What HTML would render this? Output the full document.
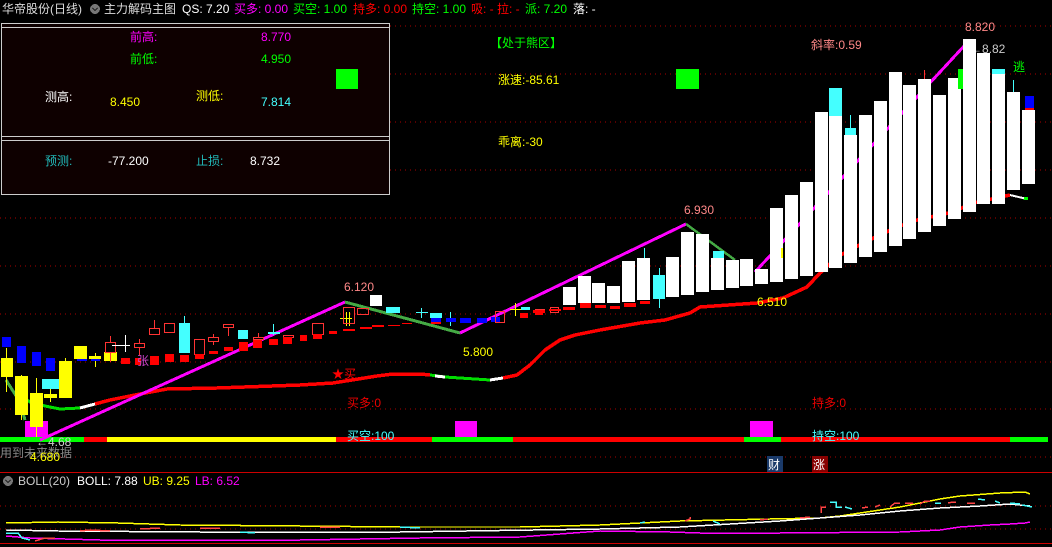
<!DOCTYPE html>
<html><head><meta charset="utf-8"><style>
html,body{margin:0;padding:0;background:#000;width:1052px;height:547px;overflow:hidden}
svg{display:block}
text{font-family:"Liberation Sans","Noto Sans CJK SC",sans-serif;font-size:12px}
</style></head><body>
<svg width="1052" height="547" viewBox="0 0 1052 547" xmlns="http://www.w3.org/2000/svg" shape-rendering="crispEdges">
<rect width="1052" height="547" fill="#000"/>
<g stroke="#a00" stroke-width="1" stroke-dasharray="1,4">
<line x1="390" y1="26" x2="1052" y2="26"/><line x1="390" y1="74" x2="1052" y2="74"/><line x1="390" y1="122" x2="1052" y2="122"/><line x1="390" y1="170" x2="1052" y2="170"/>
<line x1="0" y1="218" x2="1052" y2="218"/><line x1="0" y1="266" x2="1052" y2="266"/><line x1="0" y1="314" x2="1052" y2="314"/><line x1="0" y1="362" x2="1052" y2="362"/><line x1="0" y1="409" x2="1052" y2="409"/><line x1="0" y1="457" x2="1052" y2="457"/>
<line x1="0" y1="506" x2="1052" y2="506"/><line x1="0" y1="529" x2="1052" y2="529"/>
</g>
<line x1="0" y1="472.5" x2="1052" y2="472.5" stroke="#c00"/>
<line x1="0" y1="543.5" x2="1052" y2="543.5" stroke="#c00"/>

<text x="2" y="13" fill="#ddd">华帝股份(日线)</text>
<circle cx="95" cy="9" r="5" fill="#777"/><path d="M92.5 8 L95 10.5 L97.5 8" stroke="#222" fill="none" stroke-width="1.3"/>
<text x="104" y="13" fill="#ddd">主力解码主图</text>
<text x="182" y="13" fill="#fff">QS: 7.20</text>
<text x="234" y="13" fill="#f0f">买多: 0.00</text>
<text x="293" y="13" fill="#0f0">买空: 1.00</text>
<text x="353" y="13" fill="#f00">持多: 0.00</text>
<text x="412" y="13" fill="#0f0">持空: 1.00</text>
<text x="471" y="13" fill="#f00">吸: -</text>
<text x="497" y="13" fill="#f00">拉: -</text>
<text x="525" y="13" fill="#0f0">派: 7.20</text>
<text x="573" y="13" fill="#fff">落: -</text>

<rect x="1.5" y="23.5" width="388" height="171" fill="#0e0000" stroke="#ccc"/>
<line x1="2" y1="27.5" x2="389" y2="27.5" stroke="#ccc"/>
<line x1="2" y1="136.5" x2="389" y2="136.5" stroke="#ccc"/>
<line x1="2" y1="140.5" x2="389" y2="140.5" stroke="#ccc"/>
<text x="130" y="41" fill="#f0f">前高:</text><text x="261" y="41" fill="#f0f">8.770</text>
<text x="130" y="63" fill="#0f0">前低:</text><text x="261" y="63" fill="#0f0">4.950</text>
<text x="45" y="101" fill="#fff">测高:</text><text x="110" y="106" fill="#ff0">8.450</text>
<text x="196" y="100" fill="#ff0">测低:</text><text x="261" y="106" fill="#4ff">7.814</text>
<text x="45" y="165" fill="#2bb">预测:</text><text x="108" y="165" fill="#fff">-77.200</text>
<text x="196" y="165" fill="#2bb">止损:</text><text x="250" y="165" fill="#fff">8.732</text>
<rect x="336" y="69" width="22" height="20" fill="#0f0"/>
<rect x="676" y="69" width="23" height="20" fill="#0f0"/>
<text x="490" y="47" fill="#0f0">【处于熊区】</text>
<text x="498" y="84" fill="#ff0">涨速:-85.61</text>
<text x="498" y="146" fill="#ff0">乖离:-30</text>
<text x="811" y="49" fill="#f88">斜率:0.59</text>
<text x="965" y="31" fill="#f88">8.820</text>
<text x="970" y="53" fill="#ccc">←8.82</text>
<text x="1013" y="71" fill="#0f0">逃</text>

<rect x="0" y="437" width="84" height="5" fill="#0f0"/><rect x="84" y="437" width="23" height="5" fill="#f00"/><rect x="107" y="437" width="229" height="5" fill="#ff0"/><rect x="336" y="437" width="96" height="5" fill="#f00"/><rect x="432" y="437" width="81" height="5" fill="#0f0"/><rect x="513" y="437" width="231" height="5" fill="#f00"/><rect x="744" y="437" width="37" height="5" fill="#0f0"/><rect x="781" y="437" width="229" height="5" fill="#f00"/><rect x="1010" y="437" width="38" height="5" fill="#0f0"/>
<rect x="455" y="421" width="22" height="16" fill="#f0f"/><rect x="750" y="421" width="23" height="16" fill="#f0f"/>
<rect x="25" y="421" width="23" height="16" fill="#f0f"/>
<text x="347" y="407" fill="#e00">买多:0</text><text x="812" y="407" fill="#e00">持多:0</text>
<text x="347" y="440" fill="#4ff">买空:100</text><text x="812" y="440" fill="#4ff">持空:100</text>
<text x="0" y="457" fill="#888">用到未来数据</text>
<text x="36" y="446" fill="#ccc">←4.68</text>
<rect x="767" y="456" width="16" height="16" fill="#1a3a6a"/><text x="768" y="469" fill="#fff">财</text>
<rect x="812" y="456" width="16" height="16" fill="#800"/><text x="813" y="469" fill="#fff">涨</text>

<polyline fill="none" stroke="#0d0" stroke-width="3" points="15,392 30,402 45,406 60,409 80,408"/>
<polyline fill="none" stroke="#fff" stroke-width="3" points="80,408 95,404"/>
<polyline fill="none" stroke="#f00" stroke-width="3.5" points="95,404 110,400 140,394 167,389 217,388 300,385 333,383 377,376 393,374 420,374 430,375"/>
<polyline fill="none" stroke="#0d0" stroke-width="3" points="430,375 445,377 475,379 490,380"/>
<polyline fill="none" stroke="#fff" stroke-width="3" points="435,376 445,377"/>
<polyline fill="none" stroke="#fff" stroke-width="3" points="490,380 503,378"/>
<polyline fill="none" stroke="#f00" stroke-width="3.5" points="503,378 517,375 530,365 545,350 560,340 575,335 600,330 640,323 665,320 690,313 700,307 757,303 783,298 807,287 820,273 837,257 863,243 897,227 917,220 953,212 973,203 1010,195"/>
<polyline fill="none" stroke="#fff" stroke-width="2" points="1010,195 1027,199"/>
<rect x="1024" y="197" width="4" height="3" fill="#0f0"/>

<polyline fill="none" stroke="#4a4" stroke-width="3" points="6,380 20,402 25,420"/>
<polyline fill="none" stroke="#f0f" stroke-width="3" points="40,440 345,302"/>
<polyline fill="none" stroke="#4a4" stroke-width="3" points="345,302 460,333"/>
<polyline fill="none" stroke="#f0f" stroke-width="3" points="460,333 686,224"/>
<polyline fill="none" stroke="#4a4" stroke-width="2.5" points="686,224 735,260"/>
<polyline fill="none" stroke="#f0f" stroke-width="3" points="755,272 965,45"/>

<g>
<line x1="6.5" y1="348" x2="6.5" y2="392" stroke="#ff0"/><line x1="21.5" y1="375" x2="21.5" y2="420" stroke="#ff0"/><line x1="36.5" y1="378" x2="36.5" y2="437" stroke="#ff0"/><line x1="50.5" y1="382" x2="50.5" y2="402" stroke="#ff0"/><line x1="65.5" y1="358" x2="65.5" y2="398" stroke="#ff0"/><line x1="95.5" y1="353" x2="95.5" y2="367" stroke="#ff0"/>
<rect x="2" y="337" width="9" height="10" fill="#00f"/>
<rect x="1" y="358" width="12" height="19" fill="#ff0"/>
<rect x="17" y="346" width="9" height="17" fill="#00f"/>
<rect x="15" y="376" width="13" height="39" fill="#ff0"/>
<rect x="32" y="352" width="9" height="14" fill="#00f"/>
<rect x="30" y="393" width="13" height="34" fill="#ff0"/>
<rect x="46" y="358" width="9" height="13" fill="#00f"/>
<rect x="42" y="379" width="17" height="10" fill="#4ff"/>
<rect x="44" y="394" width="13" height="4" fill="#ff0"/>
<rect x="59" y="361" width="13" height="37" fill="#ff0"/>
<rect x="77" y="359" width="10" height="2" fill="#00f"/><rect x="74" y="346" width="13" height="13" fill="#ff0"/>
<rect x="91" y="359" width="9" height="2" fill="#00f"/><rect x="89" y="356" width="12" height="3" fill="#ff0"/>
<rect x="104" y="352" width="13" height="9" fill="#ff0"/>
<line x1="110.5" y1="336" x2="110.5" y2="362" stroke="#f33"/><rect x="105.5" y="342.5" width="10" height="10" fill="#000" stroke="#f33"/>
<line x1="112" y1="345.5" x2="130" y2="345.5" stroke="#fff"/><line x1="125.5" y1="335" x2="125.5" y2="352" stroke="#fff"/>
<rect x="121" y="358" width="9" height="6" fill="#f00"/>
<line x1="139.5" y1="339" x2="139.5" y2="355" stroke="#f33"/><rect x="134.5" y="343.5" width="10" height="4" fill="#000" stroke="#f33"/>
<rect x="135" y="358" width="6" height="7" fill="#f00"/>
<text x="137" y="365" fill="#c4c">张</text>
<rect x="150" y="356" width="9" height="9" fill="#f00"/>
<line x1="154.5" y1="320" x2="154.5" y2="335" stroke="#f33"/><rect x="149.5" y="328.5" width="10" height="6" fill="#000" stroke="#f33"/>
<rect x="164.5" y="323.5" width="10" height="9" fill="#000" stroke="#f33"/>
<rect x="165" y="354" width="9" height="8" fill="#f00"/>
<line x1="184.5" y1="316" x2="184.5" y2="323" stroke="#4ff"/><rect x="179" y="323" width="11" height="30" fill="#4ff"/>
<rect x="180" y="355" width="9" height="7" fill="#f00"/>
<rect x="194.5" y="339.5" width="10" height="15" fill="#000" stroke="#f33"/><rect x="195" y="354" width="9" height="5" fill="#f00"/>
<line x1="213.5" y1="334" x2="213.5" y2="345" stroke="#f33"/><rect x="208.5" y="337.5" width="10" height="4" fill="#000" stroke="#f33"/><rect x="209" y="351" width="9" height="3" fill="#f00"/>
<line x1="228.5" y1="324" x2="228.5" y2="336" stroke="#f33"/><rect x="223.5" y="324.5" width="10" height="3" fill="#000" stroke="#f33"/><rect x="224" y="347" width="9" height="4" fill="#f00"/>
<rect x="238" y="330" width="10" height="9" fill="#4ff"/><rect x="239" y="342" width="9" height="9" fill="#f00"/>
<line x1="258.5" y1="333" x2="258.5" y2="342" stroke="#f33"/><rect x="253.5" y="337.5" width="10" height="2" fill="#000" stroke="#f33"/><rect x="253" y="340" width="9" height="8" fill="#f00"/>
<line x1="273.5" y1="324" x2="273.5" y2="335" stroke="#4ff"/><rect x="268" y="332" width="12" height="2" fill="#4ff"/><rect x="269" y="339" width="9" height="6" fill="#f00"/>
<rect x="283.5" y="335.5" width="10" height="2" fill="#000" stroke="#f33"/><rect x="283" y="337" width="9" height="7" fill="#f00"/>
<rect x="300" y="335" width="7" height="6" fill="#f00"/>
<rect x="312.5" y="323.5" width="11" height="11" fill="#000" stroke="#f33"/><rect x="313" y="334" width="9" height="5" fill="#f00"/>
<rect x="329" y="331" width="8" height="3" fill="#f00"/>
<line x1="340" y1="318.5" x2="352" y2="318.5" stroke="#ff0"/><line x1="346.5" y1="312" x2="346.5" y2="326" stroke="#ff0"/><line x1="349.5" y1="312" x2="349.5" y2="326" stroke="#ff0"/>
<rect x="343.5" y="307.5" width="11" height="16" fill="none" stroke="#f33"/>
<rect x="357.5" y="308.5" width="11" height="6" fill="none" stroke="#f33"/>
<rect x="343" y="329" width="12" height="2" fill="#f00"/><rect x="360" y="327" width="12" height="2" fill="#f00"/><rect x="372" y="325" width="12" height="2" fill="#f00"/><rect x="388" y="325" width="12" height="1" fill="#f00"/><rect x="402" y="323" width="10" height="1" fill="#f00"/>
<rect x="370" y="295" width="12" height="11" fill="#fff"/>
<rect x="386" y="307" width="14" height="6" fill="#4ff"/>
<line x1="416" y1="312.5" x2="428" y2="312.5" stroke="#4ff"/><line x1="421.5" y1="308" x2="421.5" y2="318" stroke="#4ff"/>
<rect x="430" y="313" width="12" height="5" fill="#4ff"/><rect x="431" y="318" width="10" height="4" fill="#00f"/><rect x="431" y="322" width="10" height="2" fill="#f00"/>
<line x1="450.5" y1="312" x2="450.5" y2="326" stroke="#4ff"/><rect x="446" y="318" width="10" height="4" fill="#00f"/>
<rect x="460" y="318" width="11" height="5" fill="#00f"/><rect x="477" y="318" width="10" height="5" fill="#00f"/><rect x="491" y="317" width="9" height="5" fill="#00f"/>
<rect x="495.5" y="311.5" width="9" height="11" fill="none" stroke="#f33"/>
<line x1="510" y1="309.5" x2="522" y2="309.5" stroke="#ff0"/><line x1="515.5" y1="303" x2="515.5" y2="316" stroke="#ff0"/>
<rect x="521" y="307" width="9" height="3" fill="#4ff"/><rect x="520" y="313" width="8" height="5" fill="#f00"/>
<rect x="535.5" y="309.5" width="9" height="2" fill="none" stroke="#f33"/><rect x="535" y="313" width="8" height="2" fill="#f00"/>
<rect x="550.5" y="307.5" width="8" height="5" fill="none" stroke="#f33"/>
<rect x="533" y="310" width="12" height="3" fill="#f00"/><rect x="549" y="309" width="12" height="2" fill="#f00"/><rect x="563" y="307" width="12" height="3" fill="#f00"/>
<rect x="580" y="303" width="11" height="5" fill="#f00"/><rect x="595" y="305" width="11" height="3" fill="#f00"/><rect x="610" y="306" width="10" height="3" fill="#f00"/>
<rect x="624" y="303" width="12" height="4" fill="#f00"/><rect x="640" y="301" width="10" height="3" fill="#f00"/>
</g>

<g fill="#fff">
<rect x="563" y="287" width="13" height="18"/><rect x="578" y="276" width="13" height="27"/><rect x="592" y="283" width="13" height="20"/><rect x="607" y="286" width="13" height="17"/><rect x="622" y="261" width="13" height="41"/><rect x="637" y="258" width="13" height="42"/>
<rect x="666" y="257" width="13" height="40"/><rect x="681" y="232" width="13" height="63"/><rect x="696" y="234" width="13" height="58"/><rect x="711" y="258" width="13" height="32"/><rect x="726" y="260" width="13" height="28"/><rect x="740" y="259" width="13" height="27"/><rect x="755" y="269" width="13" height="15"/>
<rect x="770" y="208" width="13" height="74"/><rect x="785" y="195" width="13" height="84"/><rect x="800" y="182" width="13" height="94"/><rect x="815" y="112" width="13" height="160"/><rect x="829" y="116" width="13" height="152"/><rect x="844" y="135" width="13" height="128"/><rect x="859" y="115" width="13" height="142"/><rect x="874" y="101" width="13" height="151"/><rect x="889" y="72" width="13" height="174"/><rect x="903" y="85" width="13" height="154"/><rect x="918" y="79" width="13" height="153"/><rect x="933" y="95" width="13" height="131"/><rect x="948" y="78" width="13" height="141"/><rect x="963" y="39" width="13" height="173"/><rect x="977" y="53" width="13" height="151"/><rect x="992" y="74" width="13" height="130"/><rect x="1007" y="92" width="13" height="98"/><rect x="1022" y="110" width="13" height="74"/>
</g>
<line x1="659.5" y1="268" x2="659.5" y2="308" stroke="#4ff"/><rect x="653" y="275" width="12" height="24" fill="#4ff"/>
<line x1="644.5" y1="248" x2="644.5" y2="258" stroke="#4ff"/>
<rect x="713" y="251" width="11" height="7" fill="#4ff"/>
<rect x="829" y="88" width="13" height="28" fill="#4ff"/>
<line x1="850.5" y1="115" x2="850.5" y2="128" stroke="#4ff"/><rect x="845" y="128" width="11" height="7" fill="#4ff"/>
<rect x="992" y="69" width="13" height="5" fill="#4ff"/>
<line x1="1013.5" y1="80" x2="1013.5" y2="92" stroke="#4ff"/>
<rect x="1025" y="96" width="9" height="12" fill="#00f"/><rect x="1025" y="108" width="9" height="2" fill="#f00"/>
<rect x="958" y="69" width="5" height="20" fill="#0f0"/>
<line x1="924.5" y1="70" x2="924.5" y2="79" stroke="#f33"/>
<rect x="781" y="248" width="2" height="10" fill="#ff0"/>

<text x="344" y="291" fill="#f88">6.120</text>
<text x="463" y="356" fill="#ff0">5.800</text>
<text x="684" y="214" fill="#f88">6.930</text>
<text x="757" y="306" fill="#ff0">6.510</text>
<text x="332" y="378" fill="#f00">★买</text>
<text x="30" y="461" fill="#ff0">4.680</text>

<circle cx="8" cy="481" r="5" fill="#777"/><path d="M5.5 480 L8 482.5 L10.5 480" stroke="#222" fill="none" stroke-width="1.3"/>
<text x="18" y="485" fill="#ccc">BOLL(20)</text>
<text x="77" y="485" fill="#fff">BOLL: 7.88</text>
<text x="143" y="485" fill="#ff0">UB: 9.25</text>
<text x="195" y="485" fill="#f0f">LB: 6.52</text>
<polyline fill="none" stroke="#ff0" stroke-width="1.5" points="6,523 58,522 118,523 180,525 300,526 400,527 520,527 600,525 640,523 680,521 725,520 770,519 820,518 840,516 860,513 880,510 900,507 920,503 940,499 960,496 1000,493 1025,492 1030,494"/>
<polyline fill="none" stroke="#fff" stroke-width="1.5" points="6,530 58,531 200,532 400,532 600,529 680,527 730,524 780,521 820,518 860,515 900,511 940,508 980,506 1010,504 1030,506"/>
<polyline fill="none" stroke="#f0f" stroke-width="1.5" points="6,536 30,538 100,540 300,540 420,538 520,537 600,531 670,532 700,533 780,533 900,532 940,530 960,527 990,525 1010,524 1025,523 1030,522"/>
<g stroke="#4ff" stroke-width="1.5" fill="none"><polyline points="6,533 18,533 22,538 30,540"/><polyline points="240,532 255,533"/><polyline points="400,527 420,528"/><polyline points="640,523 645,522"/><polyline points="713,521 720,524"/><polyline points="830,502 836,502 836,507 842,507"/><polyline points="845,507 852,509"/><polyline points="935,503 941,503"/><polyline points="978,499 985,500"/><polyline points="995,501 1000,503"/><polyline points="1010,503 1020,504"/><polyline points="1022,505 1032,507"/></g>
<g stroke="#f44" stroke-width="1.5" fill="none"><polyline points="35,541 45,538 55,538"/><polyline points="80,531 90,530 110,531"/><polyline points="140,529 160,528"/><polyline points="200,528 220,528"/><polyline points="320,527 340,527"/><polyline points="685,521 690,519 690,517"/><polyline points="760,520 768,519"/><polyline points="800,518 810,517"/><polyline points="821,513 821,507 826,507"/><polyline points="862,508 868,507"/><polyline points="875,507 880,505"/><polyline points="890,507 895,503 900,503"/><polyline points="905,503 913,503"/><polyline points="920,504 925,501 930,501"/><polyline points="948,503 953,502 956,502"/><polyline points="967,503 975,503"/></g>
</svg>
</body></html>
